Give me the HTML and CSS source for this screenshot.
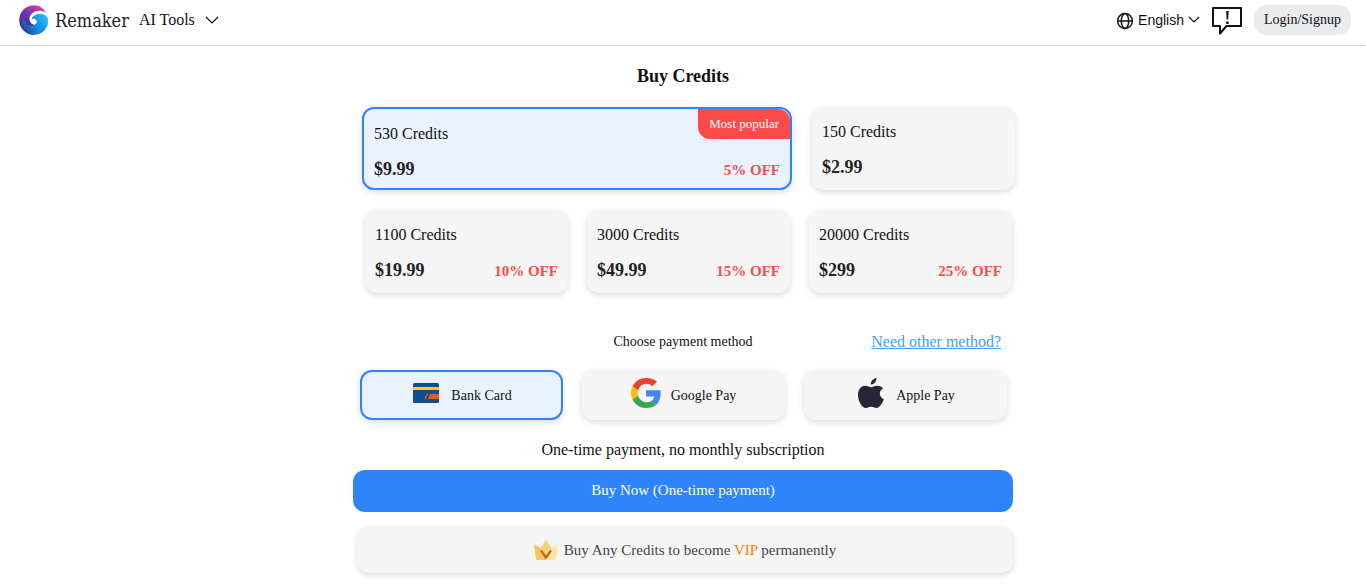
FILE: index.html
```html
<!DOCTYPE html>
<html lang="en">
<head>
  <meta charset="UTF-8">
  <meta name="viewport" content="width=device-width, initial-scale=1.0">
  <title>Remaker - Buy Credits</title>
  <link rel="stylesheet" href="styles.css">
</head>
<body>
  <header class="header">
    <a class="logo" href="#">
      <svg width="30" height="30" viewBox="0 0 30 30" aria-hidden="true">
        <defs>
          <linearGradient id="swirl" x1="0.7" y1="0" x2="0.3" y2="1">
            <stop offset="0" stop-color="#d63fae"/>
            <stop offset="0.4" stop-color="#6a35b0"/>
            <stop offset="1" stop-color="#2a2f86"/>
          </linearGradient>
          <linearGradient id="wave" x1="1" y1="0.3" x2="0" y2="0.9">
            <stop offset="0" stop-color="#1fc0f5"/>
            <stop offset="0.5" stop-color="#1b86e0"/>
            <stop offset="1" stop-color="#27348f"/>
          </linearGradient>
        </defs>
        <path fill="url(#swirl)" d="M27 7.500C24.500 3 20 .2 15 .2 6.600.2.2 6.800.2 15S6.600 29.800 15 29.800L17 20C13.500 20 11 17.500 11 14.500 11 9.500 18 5.500 27 7.500z"/>
        <path fill="url(#wave)" d="M4 24C6.500 27.800 10.500 29.800 15 29.800 23 29.800 29.200 23.500 29.200 16 29.200 11 25 7.800 20 8.500 16 9 12.500 11.500 12 14.500 13.500 13.300 16.500 13.500 17.200 15.800 18 19 14.500 21.500 10.500 20.500 7 19.600 5 16.500 4.500 13 2.500 17 2.500 21 4 24z"/>
        <path fill="#fff" d="M27 7.500C22 4.500 14 5.500 11.300 10.500 9.200 14.500 11.500 19 15 19.200 17 19.300 18.300 17.200 17.300 15.600 16.300 14.200 14 14 12.800 15.300 12.300 12 16 9.300 20 8.800 23.500 8.400 26.800 9.800 28.600 12.500 28.500 10.500 28 9 27 7.500z"/>
      </svg>
      <span class="logo-name">Remaker</span>
    </a>
    <button class="nav-item" type="button">
      AI Tools
      <svg width="14" height="8" viewBox="0 0 14 8" aria-hidden="true"><path class="line" d="M1 1l6 6 6-6"/></svg>
    </button>
    <div class="header-right">
      <button class="lang" type="button">
        <svg class="globe" width="18" height="18" viewBox="0 0 18 18" aria-hidden="true">
          <g fill="none" stroke="#111" stroke-width="1.500">
            <circle cx="9" cy="9" r="7.400"/>
            <ellipse cx="9" cy="9" rx="3.700" ry="7.400"/>
            <path d="M1.600 9h14.800"/>
          </g>
        </svg>
        <span>English</span>
        <svg width="12" height="8" viewBox="0 0 12 8" aria-hidden="true"><path class="line" d="M1 1l5 5 5-5"/></svg>
      </button>
      <button class="feedback" type="button" aria-label="Feedback">
        <svg width="30" height="30" viewBox="0 0 30 30" aria-hidden="true">
          <path fill="none" stroke="#111" stroke-width="2" stroke-linejoin="round" d="M1 3h28v18H14.500L8 28.500V21H1z"/>
          <path fill="#111" d="M14.200 6h2.400l-.4 8.500h-1.600zM14.200 16.500h2.400v2.400h-2.400z"/>
        </svg>
      </button>
      <button class="login" type="button">Login/Signup</button>
    </div>
  </header>

  <main class="container">
    <h1 class="title">Buy Credits</h1>

    <div class="plans">
      <div class="plans-top">
        <button class="card plan active" type="button">
          <span class="badge">Most popular</span>
          <span class="credits">530 Credits</span>
          <span class="plan-row"><b class="price">$9.99</b><b class="off">5% OFF</b></span>
        </button>
        <button class="card plan" type="button">
          <span class="credits">150 Credits</span>
          <span class="plan-row"><b class="price">$2.99</b></span>
        </button>
      </div>
      <div class="plans-bottom">
        <button class="card plan" type="button">
          <span class="credits">1100 Credits</span>
          <span class="plan-row"><b class="price">$19.99</b><b class="off">10% OFF</b></span>
        </button>
        <button class="card plan" type="button">
          <span class="credits">3000 Credits</span>
          <span class="plan-row"><b class="price">$49.99</b><b class="off">15% OFF</b></span>
        </button>
        <button class="card plan" type="button">
          <span class="credits">20000 Credits</span>
          <span class="plan-row"><b class="price">$299</b><b class="off">25% OFF</b></span>
        </button>
      </div>
    </div>

    <div class="pay-head">
      <span class="pay-title">Choose payment method</span>
      <a class="pay-link" href="#">Need other method?</a>
    </div>

    <div class="methods">
      <button class="card method active" type="button">
        <svg class="method-icon" width="30" height="30" viewBox="0 0 30 30" aria-hidden="true">
          <rect x="2" y="5" width="26" height="20" rx="1.500" fill="#0f4d92"/>
          <path fill="#ffcf00" d="M2 9h26v3H2z"/>
          <path fill="#ea5b0c" d="M19 16h9v5H17zM15.500 16h1.500l-2 5h-1.500z"/>
        </svg>
        Bank Card
      </button>
      <button class="card method" type="button">
        <svg class="method-icon" width="30" height="30" viewBox="2 2 44 44" aria-hidden="true">
          <path fill="#EA4335" d="M24 10.600c3.540 0 6.710 1.220 9.210 3.600l6.850-6.850C35.900 3.970 30.470 2 24 2 15.400 2 7.960 6.930 4.340 14.120l7.980 6.190C14.220 14.620 19.530 10.600 24 10.600z"/>
          <path fill="#4285F4" d="M45.500 24.500c0-1.500-.15-3-.4-4.400H24v8.900h12.100c-.5 2.800-2.100 5.200-4.500 6.800l7.400 5.700c4.300-4 6.500-9.800 6.500-17z"/>
          <path fill="#FBBC05" d="M12.300 27.700c-.8-2.400-.8-5 0-7.400l-8-6.200c-3.100 6.200-3.100 13.600 0 19.800z"/>
          <path fill="#34A853" d="M24 46c6 0 11-2 15-4.500l-7.400-5.700c-6.600 4.300-16.300 1.200-19.300-8.100l-8 6.200C8 41.100 15.400 46 24 46z"/>
        </svg>
        Google Pay
      </button>
      <button class="card method" type="button">
        <svg class="method-icon" width="30" height="30" viewBox="0 0 30 30" aria-hidden="true">
          <path fill="#272636" d="M20.500 0c.3 3.500-2.700 6.700-5.700 6.500C14.500 3.300 17.500.3 20.500 0zM27 10.300c-4.500 2.800-4.200 8.800.9 11C26.500 25.300 23.500 30 20.500 30c-2 0-3-1.200-5.300-1.200S11.800 30 9.900 30C5.800 30 2 22.800 2 17c0-6 3.700-9.200 7.300-9.200 2.400 0 4.200 1.500 5.700 1.500 1.400 0 3.500-1.700 6.400-1.600 2.400.1 4.400 1.100 5.600 2.600z"/>
        </svg>
        Apple Pay
      </button>
    </div>

    <p class="note">One-time payment, no monthly subscription</p>
    <button class="buy" type="button">Buy Now (One-time payment)</button>

    <div class="card vip">
      <svg width="24" height="20" viewBox="0 0 24 20" aria-hidden="true">
        <path fill="#f6c468" d="M0 4l6.500 4L12 0v20H3.500C2.500 20 2 19.500 1.800 18.500z"/>
        <path fill="#ffe3a0" d="M24 4l-6.500 4L12 0v20h8.500c1 0 1.500-.5 1.700-1.500z"/>
        <path fill="#f9d17c" d="M6.500 8L12 0l5.500 8L12 17z"/>
        <path fill="none" stroke="#b96b16" stroke-width="2.200" d="M7 10.500l5 7 5-7"/>
      </svg>
      <span>Buy Any Credits to become <span class="vip-word">VIP</span> permanently</span>
    </div>
  </main>
</body>
</html>
```
FILE: styles.css
```css
* {
  box-sizing: border-box;
}
body {
  margin: 0;
  font-family: "Liberation Serif", "Times New Roman", serif;
  font-size: 16px;
  color: #111;
  background: #fff;
}
button {
  font-family: inherit;
  color: inherit;
  border: none;
  background: none;
  padding: 0;
  cursor: pointer;
}
svg {
  display: block;
  flex: none;
}

/* header */
.header {
  display: flex;
  align-items: center;
  padding: 5px 15px 10px 19px;
  border-bottom: 1px solid #d8d8d8;
}
.logo {
  display: flex;
  align-items: center;
  gap: 6px;
  color: #222;
  text-decoration: none;
}
.logo-name {
  font-family: "DejaVu Serif Condensed", "DejaVu Serif", serif;
  font-size: 18px;
}
.nav-item {
  display: flex;
  align-items: center;
  gap: 10px;
  margin-left: 10px;
  font-size: 16px;
}
.line {
  fill: none;
  stroke: #111;
  stroke-width: 1.2;
}
.header-right {
  display: flex;
  align-items: center;
  gap: 12px;
  margin-left: auto;
}
.lang {
  display: flex;
  align-items: center;
  gap: 4px;
  font-family: "Liberation Sans", Arial, sans-serif;
  font-size: 14px;
}
.globe {
  margin-top: 2px;
}
.login {
  height: 30px;
  padding: 0 10px;
  border-radius: 12px;
  background: #e9ebed;
  font-size: 14px;
}

/* content */
.container {
  max-width: 660px;
  margin: 0 auto;
  padding-bottom: 24px;
}
.title {
  margin: 20px 0;
  font-size: 18px;
  line-height: 21px;
  text-align: center;
}
.card {
  border-radius: 12px;
  background: #f5f5f5;
  box-shadow: 0 2px 6px rgba(0, 0, 0, 0.15);
}
.card.active {
  border: 2px solid #2d84fb;
  background: #eaf1ff;
}
.plans {
  display: grid;
  gap: 20px;
  margin: 0 1px 0 12px;
}
.plans-top {
  display: grid;
  grid-template-columns: 430fr 203fr;
  gap: 20px;
  margin: 0 -3px;
}
.plans-bottom {
  display: grid;
  grid-template-columns: repeat(3, 1fr);
  gap: 19px;
}
.plan {
  position: relative;
  display: flex;
  flex-direction: column;
  justify-content: flex-start;
  gap: 15px;
  height: 83px;
  padding: 16px 10px 0;
  text-align: left;
}
.credits {
  font-size: 16px;
  line-height: 18px;
}
.plan-row {
  display: flex;
  align-items: baseline;
  justify-content: space-between;
  width: 100%;
  line-height: 22px;
}
.price {
  font-size: 18px;
  color: #222;
}
.off {
  font-size: 15px;
  color: #fd4b4b;
}
.badge {
  position: absolute;
  top: 0;
  right: 0;
  padding: 0 11px;
  border-radius: 0 12px 0 12px;
  background: #fd4b4b;
  color: #fff;
  font-size: 13px;
  line-height: 30px;
}

/* payment */
.pay-head {
  display: grid;
  grid-template-columns: 1fr auto 1fr;
  align-items: center;
  margin-top: 39px;
  padding: 0 12px;
}
.pay-title {
  grid-column: 2;
  font-size: 14px;
}
.pay-link {
  justify-self: end;
  color: #409eff;
  line-height: 20px;
}
.methods {
  display: grid;
  grid-template-columns: repeat(3, 1fr);
  gap: 19px;
  margin: 18px 6px 20px 7px;
}
.method {
  display: flex;
  align-items: center;
  justify-content: center;
  gap: 10px;
  height: 50px;
  padding-top: 2px;
  font-size: 14px;
}
.method-icon {
  margin-bottom: 6px;
}
.note {
  margin: 0 0 10px;
  line-height: 20px;
  text-align: center;
}
.buy {
  width: 100%;
  height: 42px;
  padding-bottom: 2px;
  border-radius: 12px;
  background: #2d84fb;
  color: #fff;
  font-size: 15px;
}
.vip {
  display: flex;
  align-items: center;
  justify-content: center;
  gap: 6px;
  height: 46px;
  margin: 15px 0 0 4px;
  color: #444;
  font-size: 15px;
}
.vip-word {
  color: #ff7d00;
}
```
